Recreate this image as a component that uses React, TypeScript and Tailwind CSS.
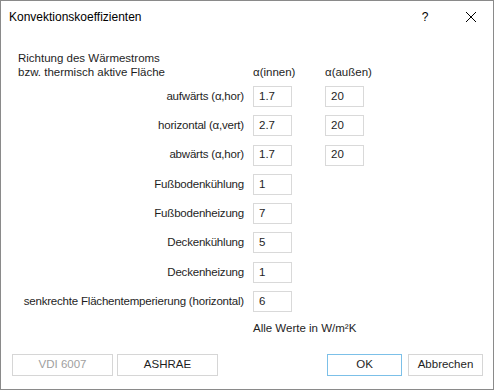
import React from 'react';

const rows: { label: string; inner: string; outer?: string }[] = [
  { label: 'aufwärts (α,hor)', inner: '1.7', outer: '20' },
  { label: 'horizontal (α,vert)', inner: '2.7', outer: '20' },
  { label: 'abwärts (α,hor)', inner: '1.7', outer: '20' },
  { label: 'Fußbodenkühlung', inner: '1' },
  { label: 'Fußbodenheizung', inner: '7' },
  { label: 'Deckenkühlung', inner: '5' },
  { label: 'Deckenheizung', inner: '1' },
  { label: 'senkrechte Flächentemperierung (horizontal)', inner: '6' },
];

function Field({ value }: { value: string }) {
  return (
    <div className="w-[39px] h-[21px] border border-[#d9d9d9] bg-white pl-[5px] flex items-center text-[11.5px] text-[#1e1e1e]">
      {value}
    </div>
  );
}

function Button({ children, disabled, primary }: { children: React.ReactNode; disabled?: boolean; primary?: boolean }) {
  return (
    <div
      className={
        'h-[22px] flex items-center justify-center bg-white border text-[11.5px] ' +
        (primary ? 'border-[#7cc0e8] ' : 'border-[#d6d6d6] ') +
        (disabled ? 'text-[#a0a0a0]' : 'text-[#1e1e1e]')
      }
    >
      {children}
    </div>
  );
}

export default function App() {
  return (
    <div
      className="w-[494px] h-[390px] bg-white border border-[#8a8a8a] flex flex-col text-[#1e1e1e]"
      style={{ fontFamily: '"Liberation Sans", "DejaVu Sans", sans-serif' }}
    >
      {/* title bar */}
      <div className="h-[32px] flex items-center pl-[8px] shrink-0">
        <span className="text-[12px] text-black flex-1">Konvektionskoeffizienten</span>
        <span className="text-[12px] text-black w-[46px] text-center">?</span>
        <span className="w-[46px] flex items-center justify-center mr-[-1px]">
          <svg width="10" height="10" viewBox="0 0 10 10" fill="none" stroke="#000" strokeWidth="1">
            <path d="M0 0L10 10M10 0L0 10" />
          </svg>
        </span>
      </div>

      {/* body */}
      <div className="flex-1 flex flex-col pl-[17px]">
        <div className="flex items-end mt-[18px] text-[11.5px] leading-[14px] whitespace-nowrap">
          <div className="w-[235px]">
            <div>Richtung des Wärmestroms</div>
            <div>bzw. thermisch aktive Fläche</div>
          </div>
          <div className="w-[72px]">α(innen)</div>
          <div>α(außen)</div>
        </div>

        <div className="flex flex-col gap-[8.3px] mt-[7px]">
          {rows.map((r) => (
            <div key={r.label} className="flex items-center">
              <div className="w-[226px] text-right text-[11.5px] whitespace-nowrap tracking-[-0.2px]">{r.label}</div>
              <div className="ml-[9px]">
                <Field value={r.inner} />
              </div>
              {r.outer && (
                <div className="ml-[33px]">
                  <Field value={r.outer} />
                </div>
              )}
            </div>
          ))}
        </div>

        <div className="ml-[235px] mt-[8px] text-[11.5px]">Alle Werte in W/m²K</div>

        <div className="flex mt-auto mb-[13px] ml-[-6px] mr-[10px]">
          <div className="w-[101px]">
            <Button disabled>VDI 6007</Button>
          </div>
          <div className="w-[101px] ml-[4px]">
            <Button>ASHRAE</Button>
          </div>
          <div className="flex-1" />
          <div className="w-[75px]">
            <Button primary>OK</Button>
          </div>
          <div className="w-[75px] ml-[6px]">
            <Button>Abbrechen</Button>
          </div>
        </div>
      </div>
    </div>
  );
}
